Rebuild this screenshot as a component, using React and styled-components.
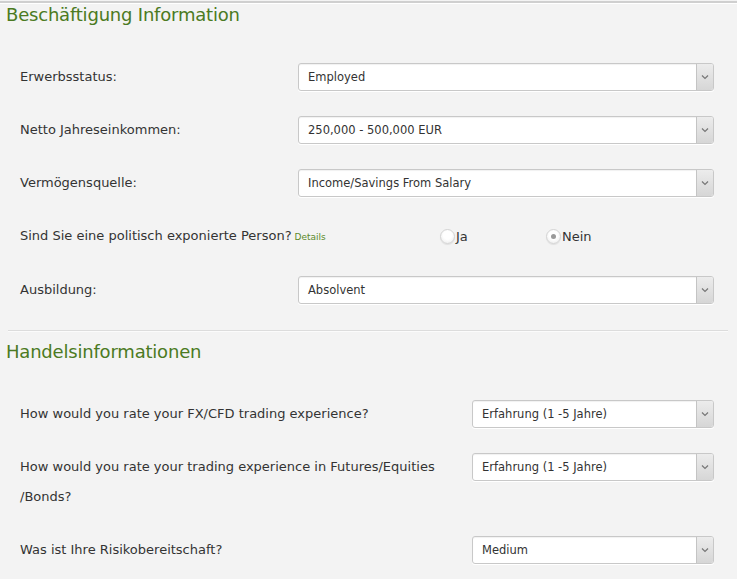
import React from 'react';
import styled, { createGlobalStyle } from 'styled-components';

const GlobalStyle = createGlobalStyle`
  html, body {
    margin: 0;
    padding: 0;
    background: #f3f3f3;
  }
  body {
    font-family: "DejaVu Sans", Verdana, sans-serif;
    color: #333;
  }
`;

const Page = styled.div`
  width: 737px;
  height: 579px;
  overflow: hidden;
  border-top: 2px solid #cfcfcf;
  margin-top: 1px;
  box-shadow: inset 0 1px 0 #fff;
`;

const Title = styled.h2`
  margin: 0;
  padding: ${(p) => p.pad};
  font-size: 18px;
  font-weight: normal;
  color: #4b7a22;
  line-height: 24px;
  letter-spacing: -0.2px;
`;

const Section = styled.div`
  padding: ${(p) => p.pad};
`;

const Row = styled.div`
  display: grid;
  grid-template-columns: ${(p) => p.labelWidth}px 1fr;
  align-items: start;
  margin-bottom: 23px;
  padding: 0 23px 0 20px;
`;

const Label = styled.div`
  font-size: 13px;
  line-height: 30px;
  color: #333;
  white-space: ${(p) => (p.nowrap ? 'nowrap' : 'normal')};
`;

const Small = styled.span`
  font-size: 9px;
  color: #5b8a2a;
  margin-left: 3px;
`;

const SelectBox = styled.div`
  position: relative;
  height: 28px;
  margin-top: 1px;
  background: #fff;
  border: 1px solid #c8c8c8;
  border-radius: 3px;
  box-shadow: 0 1px 0 #fff, inset 0 1px 1px rgba(0, 0, 0, 0.06);
  display: flex;
  align-items: center;
  font-size: 11.5px;
  color: #333;
  padding-left: 9px;
  box-sizing: border-box;
`;

const Arrow = styled.div`
  position: absolute;
  right: 0;
  top: 0;
  bottom: 0;
  width: 16px;
  border-left: 1px solid #c4c4c4;
  border-radius: 0 2px 2px 0;
  background: linear-gradient(#ececec, #d6d6d6);
  display: flex;
  align-items: center;
  justify-content: center;
`;

const Radios = styled.div`
  display: flex;
  align-items: center;
  height: 30px;
`;

const RadioItem = styled.label`
  display: flex;
  align-items: center;
  width: 106px;
  font-size: 13px;
  color: #333;
`;

const Circle = styled.span`
  width: 15px;
  height: 15px;
  border-radius: 50%;
  box-sizing: border-box;
  border: 1px solid #d4d4d4;
  background: radial-gradient(circle at 50% 40%, #ffffff 40%, #e8e8e8 100%);
  box-shadow: 0 1px 1px rgba(0, 0, 0, 0.08);
  display: flex;
  align-items: center;
  justify-content: center;
  margin-right: 1px;
  &::after {
    content: '';
    width: 5px;
    height: 5px;
    border-radius: 50%;
    background: ${(p) => (p.checked ? '#9a9a9a' : 'transparent')};
  }
`;

const Divider = styled.hr`
  border: 0;
  border-top: 1px solid #dcdcdc;
  border-bottom: 1px solid #fbfbfb;
  margin: 0 9px 0 8px;
`;

const Chevron = () => (
  <svg width="8" height="6" viewBox="0 0 8 6">
    <path d="M1 1.5 L4 4.5 L7 1.5" fill="none" stroke="#777" strokeWidth="1.2" />
  </svg>
);

const Select = ({ value }) => (
  <SelectBox>
    {value}
    <Arrow>
      <Chevron />
    </Arrow>
  </SelectBox>
);

export default function App() {
  return (
    <>
      <GlobalStyle />
      <Page>
        <Title pad="0 6px">Beschäftigung Information</Title>
        <Section pad="35px 0 2px">
          <Row labelWidth={278}>
            <Label>Erwerbsstatus:</Label>
            <Select value="Employed" />
          </Row>
          <Row labelWidth={278}>
            <Label>Netto Jahreseinkommen:</Label>
            <Select value="250,000 - 500,000 EUR" />
          </Row>
          <Row labelWidth={278}>
            <Label>Vermögensquelle:</Label>
            <Select value="Income/Savings From Salary" />
          </Row>
          <Row labelWidth={420}>
            <Label nowrap>
              Sind Sie eine politisch exponierte Person?<Small>Details</Small>
            </Label>
            <Radios>
              <RadioItem>
                <Circle />
                Ja
              </RadioItem>
              <RadioItem>
                <Circle checked />
                Nein
              </RadioItem>
            </Radios>
          </Row>
          <Row labelWidth={278}>
            <Label>Ausbildung:</Label>
            <Select value="Absolvent" />
          </Row>
        </Section>
        <Divider />
        <Title pad="8px 6px 0">Handelsinformationen</Title>
        <Section pad="35px 0 0">
          <Row labelWidth={452}>
            <Label>How would you rate your FX/CFD trading experience?</Label>
            <Select value="Erfahrung (1 -5 Jahre)" />
          </Row>
          <Row labelWidth={452}>
            <Label>
              How would you rate your trading experience in Futures/Equities
              <br />
              /Bonds?
            </Label>
            <Select value="Erfahrung (1 -5 Jahre)" />
          </Row>
          <Row labelWidth={452}>
            <Label>Was ist Ihre Risikobereitschaft?</Label>
            <Select value="Medium" />
          </Row>
        </Section>
      </Page>
    </>
  );
}
